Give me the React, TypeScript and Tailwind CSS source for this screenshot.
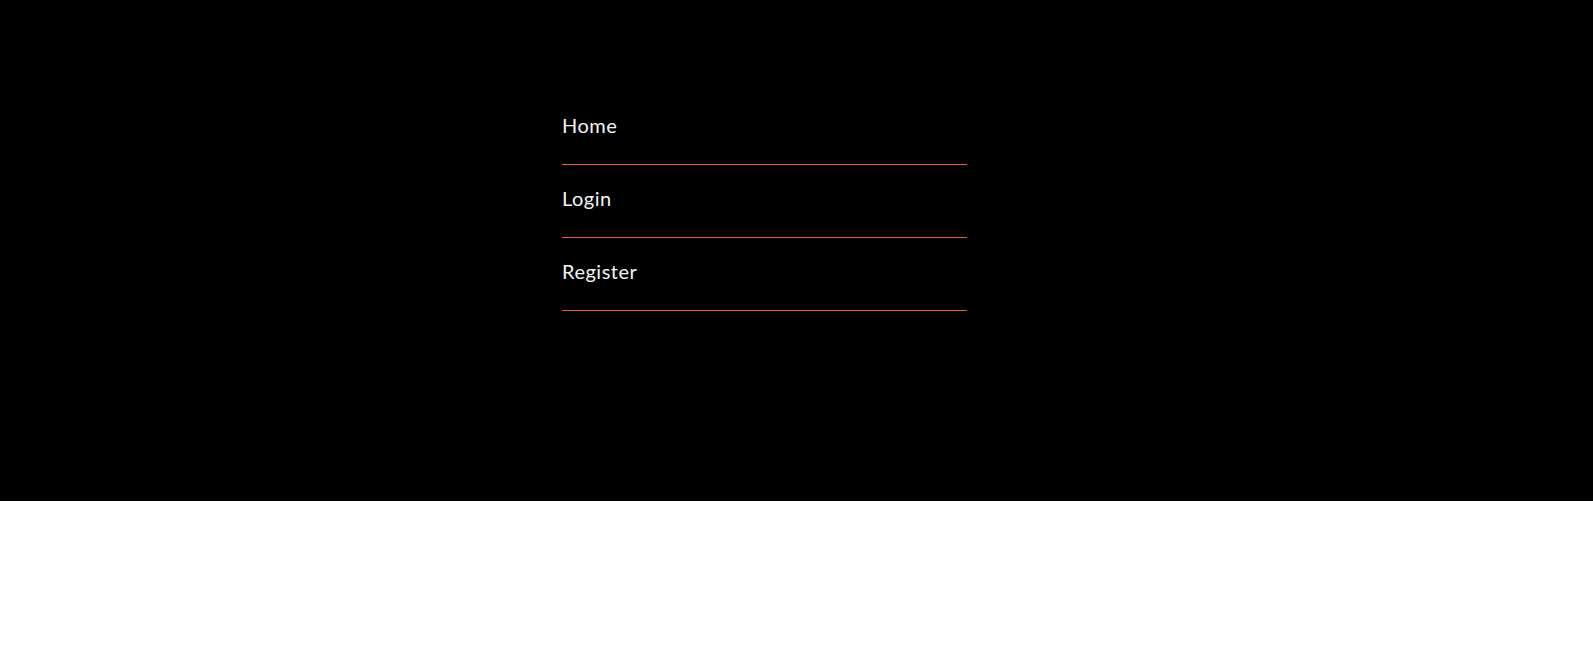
const links = ['Home', 'Login', 'Register']

export default function App() {
  return (
    <div className="min-h-screen bg-white">
      <nav className="h-[501px] bg-black pt-[92px]">
        <ul className="ml-[562px] w-[405px]">
          {links.map((name) => (
            <li
              key={name}
              className="border-b border-[#f2583c] pt-[21px] pb-[27px]"
            >
              <a
                href="#"
                className="block text-[20px] leading-6 tracking-[0.025em] text-[#f4f4f4] font-['Lato',sans-serif]"
              >
                {name}
              </a>
            </li>
          ))}
        </ul>
      </nav>
    </div>
  )
}
